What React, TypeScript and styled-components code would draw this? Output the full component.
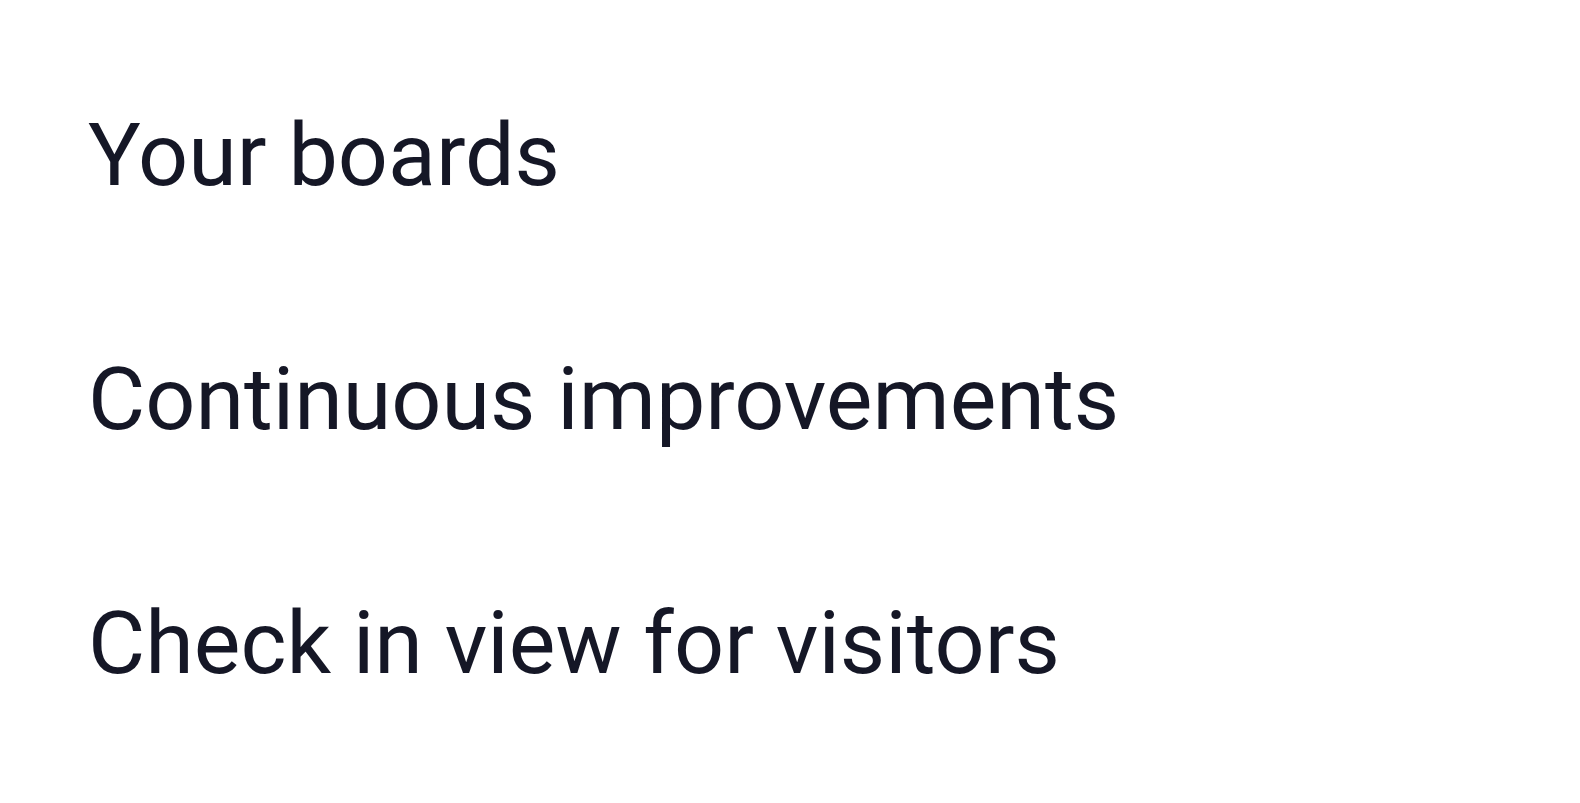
import * as React from 'react';
import styled, { createGlobalStyle } from 'styled-components';

const GlobalStyle = createGlobalStyle`
    html, body {
        margin: 0;
        padding: 0;
        background: #ffffff;
    }
    body {
        font-family: Roboto, "Noto Sans", "Liberation Sans", sans-serif;
        -webkit-font-smoothing: antialiased;
    }
`;

const Menu = styled.ul`
    list-style: none;
    margin: 0;
    padding: 33px 0 0 88px;
    display: flex;
    flex-direction: column;
`;

const MenuItem = styled.li`
    font-size: 88px;
    line-height: 244px;
    font-weight: 400;
    color: #151726;
    white-space: nowrap;
`;

const items = ['Your boards', 'Continuous improvements', 'Check in view for visitors'];

export default function App() {
    return (
        <>
            <GlobalStyle />
            <Menu>
                {items.map((label) => (
                    <MenuItem key={label}>{label}</MenuItem>
                ))}
            </Menu>
        </>
    );
}
